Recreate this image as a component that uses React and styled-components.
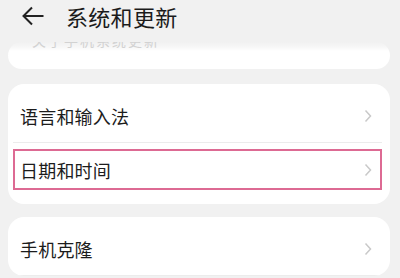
import React from "react";
import styled, { createGlobalStyle } from "styled-components";

const GlobalStyle = createGlobalStyle`
  html, body {
    margin: 0;
    padding: 0;
    background: #f1f1f1;
  }
  body {
    font-family: "Noto Sans CJK SC", "Noto Sans", sans-serif;
    overflow: hidden;
  }
`;

const Page = styled.div`
  width: 400px;
  height: 278px;
  overflow: hidden;
  display: flex;
  flex-direction: column;
  background: #f1f1f1;
`;

const Header = styled.div`
  height: 32px;
  display: flex;
  align-items: center;
  padding: 0 0 0 22px;
  gap: 22px;
`;

const Title = styled.div`
  font-size: 22px;
  color: #1b1b1b;
  line-height: 32px;
  letter-spacing: 0.3px;
`;

const Content = styled.div`
  display: flex;
  flex-direction: column;
  padding: 10px 10px 0 8px;
`;

const Card = styled.div`
  background: ${(p) => (p.$fade ? "linear-gradient(#f1f1f1 0, #f7f7f7 5px, #fff 9px)" : "#fff")};
  border-radius: 16px;
  padding: ${(p) => p.$pad || "6px 0 8px"};
  margin-bottom: ${(p) => p.$gap || "14px"};
  overflow: hidden;
`;

const Peek = styled.div`
  height: 36px;
  overflow: hidden;
  font-size: 14px;
  line-height: 14px;
  color: #d2d2d2;
  padding-left: 24px;
  margin-top: -9px;
  letter-spacing: 2px;
`;

const Row = styled.div`
  height: 53px;
  margin: 0 8px 0 5px;
  padding: 6px 0;
  box-sizing: border-box;
  border-bottom: ${(p) => (p.$divider ? "1px solid #ececec" : "none")};
`;

const Inner = styled.div`
  height: 100%;
  box-sizing: border-box;
  padding: 0 8px 0 5px;
  display: flex;
  align-items: center;
  justify-content: space-between;
  border: 2px solid ${(p) => (p.$marked ? "#dd6a93" : "transparent")};
`;

const Label = styled.span`
  font-size: 18px;
  color: #1c1c1c;
  letter-spacing: 0.2px;
`;

const Chevron = () => (
  <svg width="8" height="14" viewBox="0 0 8 14">
    <path d="M1.5 1.5 L6.5 7 L1.5 12.5" fill="none" stroke="#c9c9c9" strokeWidth="1.5" />
  </svg>
);

const BackArrow = () => (
  <svg width="22" height="20" viewBox="0 0 22 20">
    <path d="M1.5 10 H21.5 M10 1.5 L1.5 10 L10 18.5" fill="none" stroke="#222" strokeWidth="2" />
  </svg>
);

const Item = ({ label, divider, marked }) => (
  <Row $divider={divider}>
    <Inner $marked={marked}>
      <Label>{label}</Label>
      <Chevron />
    </Inner>
  </Row>
);

export default function App() {
  return (
    <Page>
      <GlobalStyle />
      <Header>
        <BackArrow />
        <Title>系统和更新</Title>
      </Header>
      <Content>
        <Card $pad="0" $fade $gap="15px">
          <Peek>关于手机系统更新</Peek>
        </Card>
        <Card $gap="13px">
          <Item label="语言和输入法" divider />
          <Item label="日期和时间" marked />
        </Card>
        <Card $pad="6px 0 0">
          <Item label="手机克隆" divider />
        </Card>
      </Content>
    </Page>
  );
}
